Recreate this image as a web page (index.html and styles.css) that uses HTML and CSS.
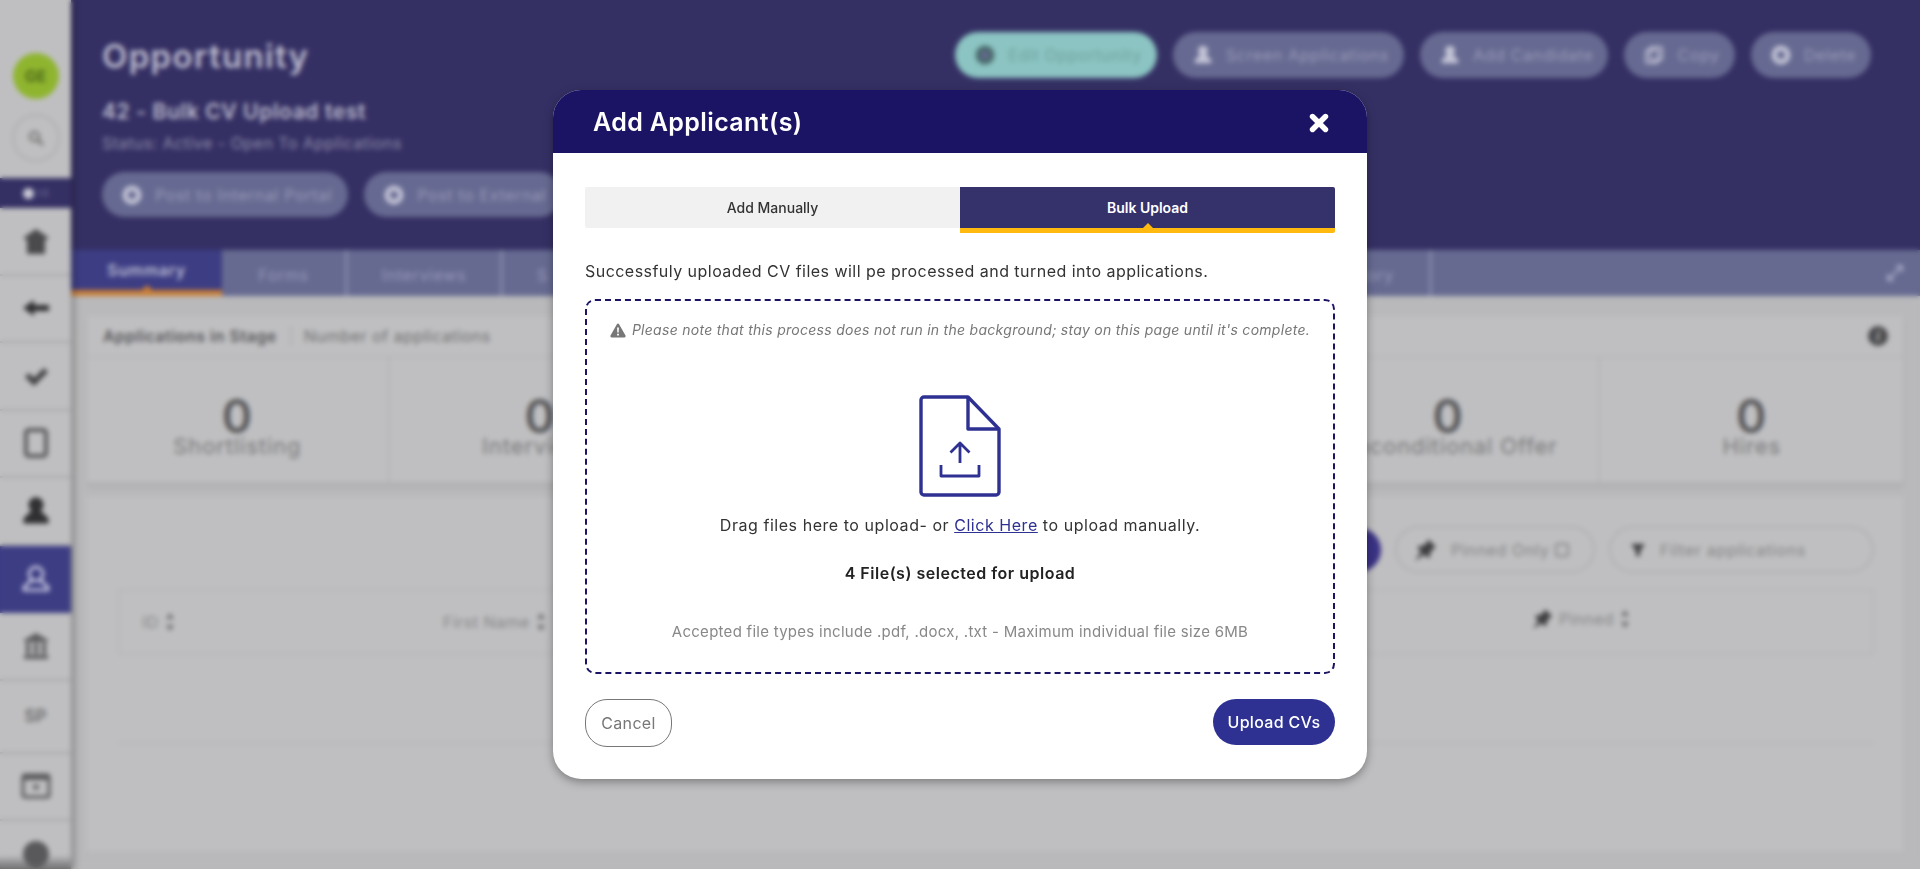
FILE: index.html
```html
<!DOCTYPE html>
<html lang="en">

<head>
  <meta charset="UTF-8">
  <meta name="viewport" content="width=device-width, initial-scale=1.0">
  <title>Add Applicant(s)</title>
  <link rel="stylesheet" href="styles.css">
</head>

<body>
  <svg class="icon-defs" aria-hidden="true">
    <symbol id="i-ring" viewBox="0 0 20 20">
      <circle cx="10" cy="10" r="9.5" fill="currentColor" />
      <circle cx="10" cy="10" r="4" fill="#666991" />
    </symbol>
    <symbol id="i-user" viewBox="0 0 24 24">
      <circle cx="12" cy="7" r="6" fill="currentColor" />
      <path d="M8 12l-6 6v4h20v-4l-6-6z" fill="currentColor" />
    </symbol>
    <symbol id="i-copy" viewBox="0 0 20 20">
      <rect x="2" y="5" width="12" height="13" rx="2" fill="none" stroke="currentColor" stroke-width="2" />
      <rect x="6" y="2" width="12" height="13" rx="2" fill="none" stroke="currentColor" stroke-width="2" />
    </symbol>
    <symbol id="i-pin" viewBox="0 0 24 24">
      <path d="M15 1l8 8-2 1-4 5 0 4-2 1-3.500-3.500L2 23l6-9.500L4.500 10l1-2 4 0 5-4z" fill="currentColor" />
    </symbol>
    <symbol id="i-sort" viewBox="0 0 10 20">
      <path d="M5 1l4 6H1zM5 19l4-6H1z" fill="currentColor" />
    </symbol>
  </svg>

  <div class="app">
    <aside class="sidebar">
      <div class="side-top">
        <div class="avatar">GE</div>
        <div class="search-circle">
          <svg width="16" height="16" viewBox="0 0 16 16">
            <circle cx="6.500" cy="6.500" r="4.500" fill="none" stroke="#777" stroke-width="2.500" />
            <path d="M10 10l5 5" stroke="#777" stroke-width="3" />
          </svg>
        </div>
      </div>
      <div class="side-toggle"><span class="toggle-dot"></span><span class="toggle-text">I:II</span></div>
      <nav class="side-nav">
        <a class="side-item">
          <svg width="30" height="32" viewBox="0 0 30 32">
            <path d="M2 13L15 4l13 9-4 2v14H6V15z" fill="#4a4a4c" />
          </svg>
        </a>
        <a class="side-item">
          <svg width="30" height="22" viewBox="0 0 30 22">
            <path d="M2 11L13 3v5h15v6H13v5z" fill="#2f2f31" />
          </svg>
        </a>
        <a class="side-item">
          <svg width="26" height="22" viewBox="0 0 26 22">
            <path d="M2 12l4-4 5 5L21 3l4 4-14 14z" fill="#414143" />
          </svg>
        </a>
        <a class="side-item">
          <svg width="26" height="30" viewBox="0 0 26 30">
            <rect x="3" y="2" width="20" height="26" rx="3" fill="none" stroke="#59595b" stroke-width="4" />
          </svg>
        </a>
        <a class="side-item">
          <svg class="side-user" width="30" height="30">
            <use href="#i-user" />
          </svg>
        </a>
        <a class="side-item active">
          <svg width="30" height="30" viewBox="0 0 30 30" fill="none" stroke="#dcdcee" stroke-width="2.500">
            <circle cx="15" cy="10" r="7" />
            <path d="M11 16l-8 7v3h24v-3l-8-7" />
          </svg>
        </a>
        <a class="side-item">
          <svg width="28" height="28" viewBox="0 0 28 28">
            <path d="M14 1l12 7v2H2V8zM4 11h4v11H4zM12 11h4v11h-4zM20 11h4v11h-4zM2 23h24v4H2z" fill="#5b5b5d" />
          </svg>
        </a>
        <a class="side-item side-tall"><span class="side-label">SP</span></a>
        <a class="side-item">
          <svg width="30" height="26" viewBox="0 0 30 26">
            <rect x="2" y="2" width="26" height="22" rx="2" fill="none" stroke="#59595b" stroke-width="3" />
            <rect x="2" y="2" width="26" height="5" fill="#59595b" />
            <path d="M15 11l4 3-4 3-4-3z" fill="#59595b" />
          </svg>
        </a>
        <a class="side-item">
          <svg width="28" height="28" viewBox="0 0 28 28">
            <circle cx="14" cy="14" r="13" fill="#59595b" />
          </svg>
        </a>
      </nav>
    </aside>

    <main class="main">
      <header class="opp-head">
        <div class="head-row">
          <h1>Opportunity</h1>
          <div class="head-actions">
            <button class="pill pill-teal"><svg width="20" height="20" class="pill-teal-ico"><use href="#i-ring" /></svg>Edit Opportunity</button>
            <button class="pill"><svg width="20" height="20"><use href="#i-user" /></svg>Screen Applications</button>
            <button class="pill"><svg width="20" height="20"><use href="#i-user" /></svg>Add Candidate</button>
            <button class="pill"><svg width="20" height="20"><use href="#i-copy" /></svg>Copy</button>
            <button class="pill"><svg width="20" height="20"><use href="#i-ring" /></svg>Delete</button>
          </div>
        </div>
        <h2>42 - Bulk CV Upload test</h2>
        <p class="opp-status">Status: Active - Open To Applications</p>
        <div class="post-actions">
          <button class="pill pill-post"><svg width="20" height="20"><use href="#i-ring" /></svg>Post to Internal Portal</button>
          <button class="pill pill-post"><svg width="20" height="20"><use href="#i-ring" /></svg>Post to External</button>
        </div>
      </header>

      <div class="tabs">
        <a class="tab active">Summary</a>
        <a class="tab">Forms</a>
        <a class="tab">Interviews</a>
        <a class="tab tab-s">S</a>
        <a class="tab tab-hidden"></a>
        <a class="tab tab-last">History</a>
        <span class="tabs-expand">
          <svg width="18" height="18" viewBox="0 0 18 18">
            <path d="M2 16l14-14M10 2h6v6M2 10v6h6" fill="none" stroke="#a9abc6" stroke-width="2" />
          </svg>
        </span>
      </div>

      <div class="content">
        <section class="stage-card">
          <div class="stage-title">
            <strong>Applications in Stage</strong>
            <span>Number of applications</span>
            <i class="info-dot">i</i>
          </div>
          <div class="stats">
            <div class="stat"><b>0</b>Shortlisting</div>
            <div class="stat"><b>0</b>Interviews</div>
            <div class="stat"></div>
            <div class="stat"></div>
            <div class="stat"><b>0</b>Unconditional Offer</div>
            <div class="stat"><b>0</b>Hires</div>
          </div>
        </section>

        <section class="list-card">
          <div class="list-tools">
            <span class="round-btn"></span>
            <span class="tool-pill tool-pinned">
              <svg width="24" height="24"><use href="#i-pin" /></svg>
              Pinned Only
              <i class="check-box"></i>
            </span>
            <span class="tool-pill tool-filter">
              <svg width="16" height="16" viewBox="0 0 16 16"><path d="M1 2h14l-5 7v5H6V9z" fill="#3e3e40" /></svg>
              Filter applications
            </span>
          </div>
          <div class="table-head">
            <span>ID <svg class="sort" width="10" height="20"><use href="#i-sort" /></svg></span>
            <span>First Name <svg class="sort" width="10" height="20"><use href="#i-sort" /></svg></span>
            <span></span>
            <span></span>
            <span></span>
            <span class="th-pinned"><svg width="22" height="22"><use href="#i-pin" /></svg>Pinned <svg class="sort" width="10" height="20"><use href="#i-sort" /></svg></span>
          </div>
          <div class="table-rule"></div>
        </section>
      </div>
    </main>
  </div>

  <div class="overlay">
    <div class="modal">
      <div class="modal-head">
        <h3>Add Applicant(s)</h3>
        <button class="modal-close" aria-label="Close">
          <svg width="20" height="20" viewBox="0 0 20 20">
            <path d="M3.500 3.500l13 13M16.500 3.500l-13 13" stroke="#fff" stroke-width="5.400" stroke-linecap="round" />
          </svg>
        </button>
      </div>

      <div class="modal-body">
        <div class="mode-tabs">
          <a class="mode-tab">Add Manually</a>
          <a class="mode-tab active">Bulk Upload</a>
        </div>

        <p class="intro">Successfuly uploaded CV files will pe processed and turned into applications.</p>

        <div class="dropzone">
          <p class="notice">
            <svg width="16" height="15" viewBox="0 0 16 15">
              <path d="M8 .5c.5 0 .9.3 1.100.7l6.400 11.400c.4.8-.1 1.900-1.100 1.900H1.600c-1 0-1.500-1.100-1.100-1.900L6.900 1.200C7.100.800 7.500.5 8 .5z" fill="#777" />
              <path d="M7.100 4.500h1.800l-.2 5H7.300zM7.100 10.700h1.800v1.800H7.100z" fill="#fff" />
            </svg>
            Please note that this process does not run in the background; stay on this page until it's complete.
          </p>

          <svg class="file-icon" width="82" height="102" viewBox="0 0 82 102" fill="none" stroke="#2e3192" stroke-width="3.400" stroke-linejoin="round">
            <path d="M49 2H5a3 3 0 0 0-3 3v92a3 3 0 0 0 3 3h72a3 3 0 0 0 3-3V34z" />
            <path d="M49 2v32h31" />
            <path d="M41 68V48M31.500 57.500L41 48l9.500 9.500" stroke-width="2.800" />
            <path d="M22 70v11h38V70" stroke-width="2.800" />
          </svg>

          <p class="drag-text">Drag files here to upload- or <a href="#">Click Here</a> to upload manually.</p>
          <p class="file-count">4 File(s) selected for upload</p>
          <p class="accepted">Accepted file types include .pdf, .docx, .txt - Maximum individual file size 6MB</p>
        </div>

        <div class="modal-foot">
          <button class="btn-cancel">Cancel</button>
          <button class="btn-upload">Upload CVs</button>
        </div>
      </div>
    </div>
  </div>
</body>

</html>
```

FILE: styles.css
```css
* {
  box-sizing: border-box;
}

html,
body {
  height: 100%;
}

body {
  margin: 0;
  overflow: hidden;
  background-color: #bbbbbd;
  font-family: Inter, "Liberation Sans", sans-serif;
}

h1,
h2,
h3,
p {
  margin: 0;
}

button {
  font-family: inherit;
  border: none;
  cursor: pointer;
}

.icon-defs {
  display: none;
}

/* page behind the modal, the overlay blurs it */

.app {
  display: flex;
  height: 869px;
  background-color: #b9b9bb;
}

.sidebar {
  width: 71px;
  flex-shrink: 0;
  background: linear-gradient(to top, #6e6e70 0, #bfbfc1 14px);
  box-shadow: 3px 0 6px rgba(0, 0, 0, 0.3);
  position: relative;
  z-index: 1;
}

.side-top {
  height: 178px;
  display: flex;
  flex-direction: column;
  align-items: center;
  padding-top: 53px;
  gap: 15px;
}

.avatar {
  width: 46px;
  height: 46px;
  border-radius: 50%;
  background-color: #8fb52f;
  color: #4d6a18;
  font-size: 16px;
  font-weight: 700;
  display: flex;
  align-items: center;
  justify-content: center;
}

.search-circle {
  width: 48px;
  height: 48px;
  border-radius: 50%;
  border: 2px solid #aeaeb0;
  display: flex;
  align-items: center;
  justify-content: center;
}

.side-toggle {
  height: 30px;
  background-color: #353064;
  display: flex;
  align-items: center;
  justify-content: center;
  gap: 4px;
}

.toggle-dot {
  width: 11px;
  height: 11px;
  border-radius: 50%;
  background-color: #c9c9d6;
}

.toggle-text {
  color: #77739c;
  font-size: 10px;
}

.side-item {
  height: 67.500px;
  display: flex;
  align-items: center;
  justify-content: center;
  border-bottom: 2px solid #a9a9ab;
}

.side-item.active {
  background-color: #3d3d84;
  border-bottom: none;
}

.side-tall {
  height: 73px;
}

.side-user {
  color: #303032;
}

.side-label {
  color: #6a6a6c;
  font-size: 17px;
  font-weight: 600;
}

.main {
  flex: 1;
  min-width: 0;
}

.opp-head {
  height: 250px;
  padding: 32px 49px 0 31px;
  background-color: #353064;
  color: #bdbccf;
}

.head-row {
  display: flex;
  justify-content: space-between;
  height: 46px;
}

.opp-head h1 {
  font-size: 33px;
  font-weight: 600;
  line-height: 48px;
  letter-spacing: 0.04em;
}

.head-actions {
  display: flex;
  gap: 16px;
}

.pill {
  height: 46px;
  padding: 0 15px 0 20px;
  border-radius: 23px;
  background-color: #666991;
  color: #9a9cb8;
  font-size: 16px;
  display: flex;
  align-items: center;
  gap: 13px;
  letter-spacing: 0.04em;
  white-space: nowrap;
}

.pill svg {
  color: #c3c4d6;
  flex-shrink: 0;
}

.pill-teal {
  background-color: #8bc4c2;
  color: #71a29f;
}

.pill .pill-teal-ico {
  color: #4a6a6c;
}

.opp-head h2 {
  margin-top: 22px;
  font-size: 21px;
  font-weight: 600;
  line-height: 24px;
  letter-spacing: 0.03em;
}

.opp-status {
  margin-top: 9px;
  font-size: 16px;
  line-height: 20px;
  color: #8f8eab;
  letter-spacing: 0.03em;
}

.post-actions {
  display: flex;
  gap: 16px;
  margin-top: 19px;
}

.pill-post {
  height: 45px;
  padding-right: 16px;
}

.tabs {
  height: 46px;
  display: grid;
  grid-template-columns: 151px 126px 155px 200px 597px 132px 1fr;
  background-color: #666a91;
}

.tab {
  display: flex;
  align-items: center;
  justify-content: center;
  padding-top: 3px;
  color: #9799b6;
  font-size: 16px;
  letter-spacing: 0.04em;
  border-right: 3px solid #8486a7;
}

.tab-s {
  justify-content: flex-start;
  padding-left: 34px;
}

.tab.active {
  background-color: #3d3d84;
  border-right: none;
  border-bottom: 6px solid #c97f36;
  padding-top: 0;
  color: #bcbdd3;
  font-weight: 600;
  position: relative;
}

.tab.active::after {
  content: "";
  position: absolute;
  left: 50%;
  bottom: 0;
  margin-left: -5px;
  border: 5px solid transparent;
  border-bottom-color: #c97f36;
  border-top: none;
}

.tabs-expand {
  display: flex;
  align-items: center;
  justify-content: flex-end;
  padding-right: 16px;
}

.content {
  padding: 20px 17px 0 16px;
}

.stage-card {
  background-color: #bfbfc1;
  box-shadow: 0 3px 5px rgba(0, 0, 0, 0.06);
}

.stage-title {
  height: 42px;
  display: flex;
  align-items: center;
  padding: 0 15px 0 16px;
  border-bottom: 2px solid #b7b7b9;
  font-size: 16px;
  color: #6f6f71;
}

.stage-title strong {
  color: #57575a;
  font-weight: 600;
  padding-right: 13px;
  margin-right: 12px;
  border-right: 2px solid #b1b1b3;
  letter-spacing: 0.03em;
}

.stage-title span {
  letter-spacing: 0.03em;
}

.info-dot {
  margin-left: auto;
  width: 20px;
  height: 20px;
  border-radius: 50%;
  background-color: #4a4a4c;
  color: #bfbfc1;
  font-size: 13px;
  font-weight: 700;
  text-align: center;
  line-height: 20px;
}

.stats {
  display: grid;
  grid-template-columns: repeat(6, 1fr);
  height: 126px;
  border-bottom: 2px solid #b3b3b5;
}

.stat {
  display: flex;
  flex-direction: column;
  align-items: center;
  padding-top: 41px;
  color: #79797b;
  font-size: 22px;
  letter-spacing: 0.04em;
  border-right: 2px solid #b5b5b7;
  line-height: 26px;
}

.stat:last-child {
  border-right: none;
}

.stat b {
  color: #58585a;
  font-size: 46px;
  font-weight: 600;
  line-height: 34px;
}

.list-card {
  margin-top: 13px;
  height: 354px;
  background-color: #bfbfc1;
  padding: 29px 29px 0 31px;
}

.list-tools {
  display: flex;
  justify-content: flex-end;
  align-items: center;
  gap: 14px;
  height: 47px;
}

.round-btn {
  width: 44px;
  height: 44px;
  border-radius: 50%;
  background-color: #3a3285;
}

.tool-pill {
  height: 47px;
  border-radius: 24px;
  border: 2px solid #b0b0b2;
  display: flex;
  align-items: center;
  font-size: 16px;
  color: #858587;
  letter-spacing: 0.04em;
  white-space: nowrap;
}

.tool-pill svg {
  color: #3e3e40;
}

.tool-pinned {
  width: 200px;
  padding: 0 14px 0 16px;
  gap: 14px;
}

.check-box {
  width: 14px;
  height: 14px;
  border: 2px solid #89898b;
  border-radius: 3px;
  margin-left: -8px;
}

.tool-filter {
  width: 265px;
  padding: 0 19px;
  gap: 14px;
}

.table-head {
  margin-top: 16px;
  height: 66px;
  border: 2px solid #b7b7b9;
  display: grid;
  grid-template-columns: 301px 272px 272px 272px 272px 1fr;
  align-items: center;
  padding-left: 22px;
  font-size: 16px;
  color: #868688;
  letter-spacing: 0.03em;
}

.table-head span {
  display: flex;
  align-items: center;
  gap: 6px;
}

.table-head svg {
  color: #6c6c6e;
}

.table-head .th-pinned {
  margin-top: -6px;
}

.th-pinned svg:first-child {
  color: #3e3e40;
}

.table-rule {
  margin-top: 87px;
  height: 2px;
  background-color: #b7b7b9;
}

/* modal */

.overlay {
  position: fixed;
  inset: 0;
  z-index: 10;
  display: flex;
  align-items: center;
  justify-content: center;
  backdrop-filter: blur(2.500px);
}

.modal {
  width: 814px;
  background-color: white;
  border-radius: 28px;
  box-shadow: 0 3px 10px rgba(0, 0, 0, 0.35);
  overflow: hidden;
}

.modal-head {
  height: 63px;
  padding: 0 38px 0 40px;
  background-color: #1b1464;
  display: flex;
  align-items: center;
  justify-content: space-between;
}

.modal-head h3 {
  color: white;
  font-size: 25px;
  font-weight: 600;
  letter-spacing: 0.015em;
}

.modal-close {
  padding: 2px 0 0;
  background: none;
  display: flex;
}

.modal-body {
  padding: 34px 32px 32px;
}

.mode-tabs {
  display: flex;
  height: 46px;
}

.mode-tab {
  flex: 1;
  height: 41px;
  display: flex;
  align-items: center;
  justify-content: center;
  background-color: #f1f1f1;
  color: #333;
  font-size: 14px;
  font-weight: 500;
  border-radius: 2px 0 0 2px;
}

.mode-tab.active {
  height: 46px;
  background-color: #35316a;
  border-bottom: 5px solid #ffb90f;
  color: white;
  font-weight: 600;
  border-radius: 0 2px 2px 0;
  position: relative;
}

.mode-tab.active::after {
  content: "";
  position: absolute;
  left: 50%;
  bottom: 0;
  margin-left: -5px;
  border: 5px solid transparent;
  border-bottom-color: #ffb90f;
  border-top: none;
}

.intro {
  margin-top: 26px;
  font-size: 16px;
  line-height: 24px;
  color: #333;
  letter-spacing: 0.029em;
}

.dropzone {
  margin-top: 16px;
  padding: 19px 0 29px;
  border: 2px dashed #1b1464;
  border-radius: 10px;
  text-align: center;
}

.notice {
  font-size: 14px;
  line-height: 20px;
  font-style: italic;
  color: #777;
  display: flex;
  align-items: center;
  justify-content: center;
  gap: 6px;
  letter-spacing: 0.02em;
}

.file-icon {
  display: block;
  margin: 55px auto 0;
}

.drag-text {
  margin-top: 16px;
  font-size: 16px;
  line-height: 24px;
  color: #333;
  letter-spacing: 0.034em;
}

.drag-text a {
  color: #2e3192;
}

.file-count {
  margin-top: 24px;
  font-size: 16px;
  line-height: 24px;
  font-weight: 600;
  color: #222;
  letter-spacing: 0.032em;
}

.accepted {
  margin-top: 36px;
  font-size: 15px;
  line-height: 22px;
  color: #888;
  letter-spacing: 0.018em;
}

.modal-foot {
  display: flex;
  justify-content: space-between;
  align-items: flex-start;
  margin-top: 25px;
}

.btn-cancel {
  width: 87px;
  height: 48px;
  background-color: white;
  border: 1px solid #777;
  border-radius: 22px;
  color: #777;
  font-size: 16px;
  letter-spacing: 0.02em;
}

.btn-upload {
  width: 122px;
  height: 46px;
  background-color: #2e3192;
  border-radius: 23px;
  color: white;
  font-size: 16px;
  font-weight: 500;
  letter-spacing: 0.02em;
}
```
